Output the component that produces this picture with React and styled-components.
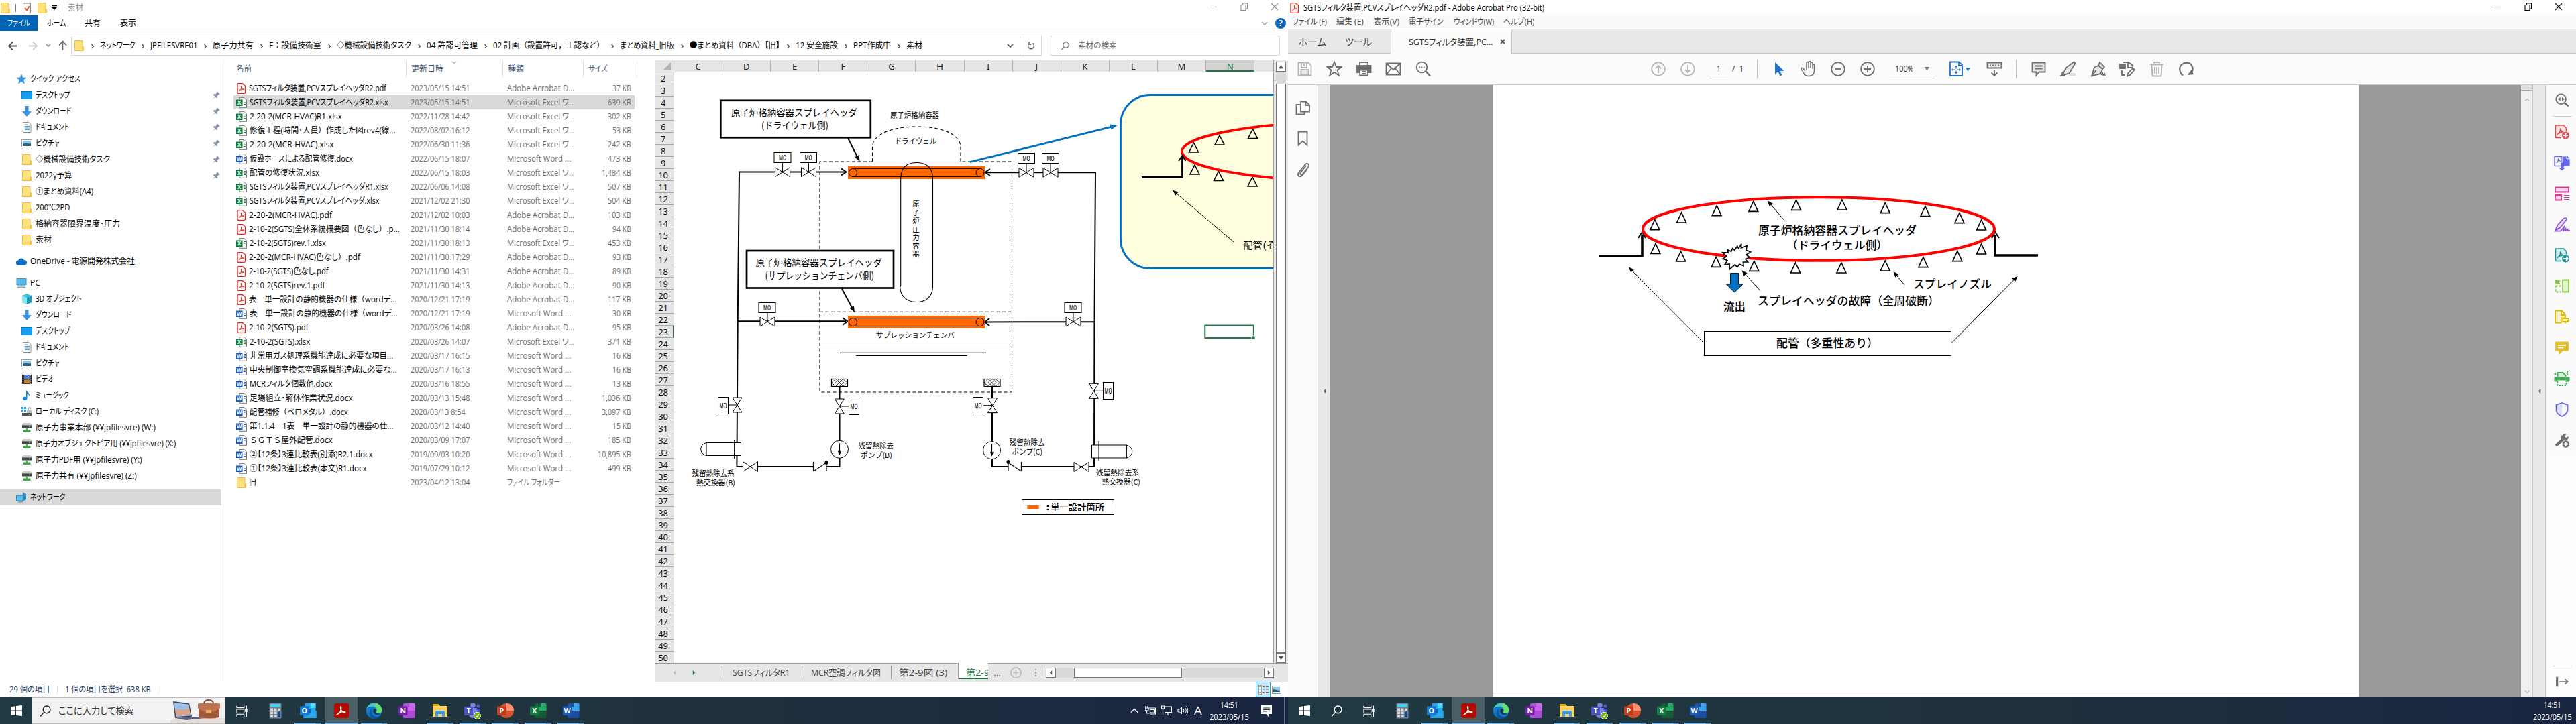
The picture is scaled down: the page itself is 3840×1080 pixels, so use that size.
import React, { useLayoutEffect, useRef, useState } from "react";
import styled, { createGlobalStyle } from "styled-components";

const Global = createGlobalStyle`
  * { box-sizing: border-box; }
  body { margin: 0; background: #fff; overflow: hidden; }
  body, #root { font-family: "Open Sans", "Noto Sans CJK JP", sans-serif; font-size: 12px; line-height: 16px; color: #000; }
  svg { display: block; flex: none; }
`;

/* ---------- text fitted to a column width ---------- */
const FitBox = styled.span`
  display: block; flex: none; width: ${(p) => p.$w}px; height: 16px; line-height: 16px;
  margin-left: ${(p) => p.$ml || 0}px; font-size: ${(p) => p.$s || 12}px; color: ${(p) => p.$c || "inherit"};
  white-space: pre;
`;
const FitInner = styled.span`
  display: inline-block; transform-origin: 0 50%; line-height: 16px; vertical-align: top;
  font-feature-settings: "palt";
`;
const Wide = styled.span`font-feature-settings: normal;`;
function Fit({ w, s, c, ml, children }) {
  const ref = useRef(null);
  const [k, setK] = useState(1);
  useLayoutEffect(() => {
    const n = ref.current.offsetWidth;
    if (n) setK(w / n);
  }, [w, children]);
  const parts = String(children).split(/([（），：　－Ａ-Ｚ]+)/);
  return (
    <FitBox $w={w} $s={s} $c={c} $ml={ml}>
      <FitInner ref={ref} style={{ transform: `scaleX(${k})` }}>
        {parts.map((t, i) => (i % 2 ? <Wide key={i}>{t}</Wide> : t))}
      </FitInner>
    </FitBox>
  );
}

/* ---------- shell ---------- */
const Desktop = styled.div`display: flex; width: 3840px; height: 1080px; overflow: hidden;`;
const Monitor = styled.div`width: 1920px; height: 1080px; display: flex; flex-direction: column; background: #fff;`;
const Row = styled.div`display: flex; align-items: center;`;
const Slot = styled.div`
  flex: none; width: ${(p) => p.$w || 44}px; height: 100%; margin-left: ${(p) => (p.$end ? "auto" : `${p.$ml || 0}px`)};
  display: flex; align-items: center; justify-content: center;
`;
const VLine = styled.div`flex: none; width: 1px; height: ${(p) => p.$h}px; background: ${(p) => p.$c || "#c0c0c0"}; margin-left: ${(p) => p.$ml || 0}px;`;

/* ---------- small icons ---------- */
const Folder = ({ s = 16 }) => (
  <svg width={s} height={s} viewBox="0 0 16 16"><path d="M1.500.5h11.500v9h1.500v6h-13z" fill="#ffe07e" stroke="#e9bd45" /><path d="M12 10h2.500v5.500h-2.500z" fill="#f3c850" /></svg>
);
const Pdf = () => (
  <svg width="16" height="16" viewBox="0 0 16 16"><path d="M3.500.7h6l4 3.500v9.600q0 1.500-1.500 1.500h-8.500q-1.500 0-1.500-1.500v-11.600q0-1.500 1.500-1.500z" fill="#fff" stroke="#e2231a" strokeWidth="1.300" /><path d="M4.500 11.500c3-1.500 4-5 3.300-7-.8-.8-1 2 1 4 1.500 1.500 3 1.500 3 .7-.5-1-5 0-7.300 2.300z" fill="none" stroke="#e2231a" /></svg>
);
const Office = ({ c, l }) => (
  <svg width="17" height="16" viewBox="0 0 17 16"><path d="M5 .6h7l3.500 3.500v11.200h-10.500z" fill="#fff" stroke="#777" /><path d="M11 5.500h3M11 8h3M11 10.500h3" stroke={c} strokeWidth="1.200" /><rect x="0" y="3.500" width="9.500" height="9.500" fill={c} /><text x="4.700" y="11" fontSize="8" fontWeight="700" textAnchor="middle" fill="#fff" fontFamily="Open Sans">{l}</text></svg>
);
const fileIcon = { p: <Pdf />, x: <Office c="#107c41" l="X" />, w: <Office c="#185abd" l="W" />, f: <Folder /> };
const Pin = () => (
  <svg width="12" height="12" viewBox="0 0 12 12"><path d="M7 0l5 4-1 1-1-.3-2 2.300.2 2.500-1 .8-2.500-2-4 3.700 3.500-4.500-2.500-2.200 1-1 2.600.2 1.900-2.300-.4-1z" fill="#8494a3" /></svg>
);
const navIcons = {
  star: <path d="M8 0l2 5.500 6 .3-4.700 3.700 1.700 6-5-3.500-5 3.500 1.700-6L0 5.800l6-.3z" fill="#3594dc" />,
  desk: <path d="M0 2.500h16v11h-16z" fill="#14a0f5" stroke="#0a74be" />,
  down: <path d="M5.500 0h5v8h4.500l-7 8-7-8h4.500z" fill="#3c93dc" />,
  doc: <><path d="M2.500.5h8.500l3 3v12h-11.500z" fill="#fff" stroke="#8a8a8a" /><path d="M5 4h4M5 6.500h7M5 9h7M5 11.500h7M5 13.500h4" stroke="#4b9bd8" /></>,
  pic: <><path d="M.5 2.500h15v11h-15z" fill="#fff" stroke="#999" /><path d="M2 4h12v8h-12z" fill="#8ec6f2" /><path d="M2 9c4-3 7 0 12-1v4h-12z" fill="#2f6275" /></>,
  cloud: <path d="M3.500 13.500a3.500 3.500 0 0 1-.4-7A5 5 0 0 1 12 6a3.800 3.800 0 0 1 1 7.500z" fill="#0f6cc4" />,
  pc: <><path d="M1 1.500h14v9.500h-14z" fill="#55bdf3" stroke="#4a90b8" /><path d="M6.500 11h3v2h-3zM2 13.500h12v1.500h-12z" fill="#8aa4b4" /></>,
  cube: <><path d="M8 0l7 3v10l-7 3-7-3v-10z" fill="#3fc4d8" /><path d="M1 3l7 3v10l-7-3z" fill="#8be4ee" /><path d="M8 6l7-3v10l-7 3z" fill="#1a9cb6" /></>,
  video: <><path d="M1 1h14v14h-14z" fill="#333" /><path d="M4 2h8v5.500h-8z" fill="#4f7fd0" /><path d="M4 8.500h8v5.500h-8z" fill="#c3813b" /><path d="M2.500 1v14M13.500 1v14" stroke="#eee" strokeDasharray="1.500 1.500" /></>,
  music: <path d="M7 0c1 3 6 4 5 9-.5-2-1.500-3-3.500-3v6.500a3.300 2.800 0 1 1-1.500-2.500z" fill="#1788dd" />,
  disk: <><path d="M1 10h14v4.500h-14z" fill="#555" /><path d="M11 12h2v1.300h-2z" fill="#5ce05c" /><path d="M0 1h3v3h-3zM4 1h3v3h-3zM0 5h3v3h-3zM4 5h3v3h-3z" fill="#1ba1e8" /><path d="M10 9v-5a2 2 0 0 1 4 0" fill="none" stroke="#999" strokeWidth="1.300" /><path d="M8 6h7v4h-7z" fill="#b8bfc4" /></>,
  net: <><path d="M1 3l2-2h10l2 2v5h-14z" fill="#c8c8c8" /><path d="M1 4.500h14v4h-14z" fill="#444" /><path d="M11 5.500h2v1.300h-2z" fill="#5ce05c" /><path d="M7 8.500h2v3h4.500v3.500h-11v-3.500h4.500z" fill="#39a845" /></>,
  network: <><path d="M10 0l5 3v8l-6 3z" fill="#2b88c9" /><path d="M.5 5h11v8h-11z" fill="#5ec0f2" stroke="#2c7fb5" /><path d="M3 14h7v1.500h-7z" fill="#7b98a8" /></>,
};
const NavIcon = ({ k }) => (k === "folder" ? <Folder /> : <svg width="16" height="16" viewBox="0 0 16 16">{navIcons[k]}</svg>);

const Stroke = ({ d, s = 16, c = "#555", sw = 1.300, fill = "none", vb = 16, children }) => (
  <svg width={s} height={s} viewBox={`0 0 ${vb} ${vb}`} fill={fill} stroke={c} strokeWidth={sw}>{d && <path d={d} />}{children}</svg>
);
const WinControls = ({ c }) => (
  <>
    <Stroke s={12} vb={12} c={c} sw={1.100} d="M.5 6.500h10.500" />
    <Stroke s={12} vb={12} c={c} sw={1.100} d="M1 3.500h7v8h-7zM3.500 3.500v-2.500h7v8h-2.500" />
    <Stroke s={12} vb={12} c={c} sw={1.100} d="M1 1l10 10M11 1l-10 10" />
  </>
);
const Controls = styled.div`
  margin-left: auto; display: flex; gap: 33.500px; align-self: flex-start; padding: 4px ${(p) => p.$r}px 0 0;
`;

/* ---------- explorer ---------- */
const ExplorerTitle = styled(Row)`height: 23px; flex: none;`;
const Ribbon = styled(Row)`height: 25px; flex: none; border-bottom: 1px solid #d9dadb;`;
const FileTab = styled.div`width: 56px; height: 23px; background: #0064b6; display: flex; align-items: center; padding-left: 11px; color: #fff; align-self: flex-start;`;
const Help = styled.div`width: 16px; height: 16px; border-radius: 50%; background: #0f66bd; color: #fff; font-weight: 700; text-align: center; margin-left: 10px; margin-right: 3px;`;
const AddressRow = styled.div`height: 42px; flex: none; display: flex; padding: 5px 0 7px;`;
const HistoryNav = styled(Row)`width: 106px; height: 30px; padding-left: 11px;`;
const AddressBox = styled(Row)`width: 1447px; height: 30px; border: 1px solid #d9d9d9; padding-left: 3px;`;
const SearchBox = styled(Row)`width: 342px; height: 30px; border: 1px solid #d9d9d9; margin-left: 13px; padding-left: 14px; gap: 13px;`;
const Sep = styled.div`width: 23px; display: flex; justify-content: center; padding-top: 1px;`;
const Body = styled.div`height: 927px; flex: none; display: flex;`;
const NavPane = styled.div`width: 333px; border-right: 1px solid #f0f0f0; padding-top: 15.500px; display: flex; flex-direction: column; gap: 8px;`;
const NavRow = styled.div`
  height: 24px; width: 330px; display: flex; align-items: center; padding-left: ${(p) => (p.$top ? 24 : 32)}px; gap: 5px;
  background: ${(p) => (p.$sel ? "#d9d9d9" : "transparent")};
`;
const PinSlot = styled.div`margin-left: auto; padding-right: 2px;`;
const ListPane = styled.div`width: 643px;`;
const Head = styled.div`height: 25px; display: flex; align-items: center; color: #4c607a; margin-bottom: 6px; position: relative;`;
const HeadCell = styled.div`width: ${(p) => p.$w}px; height: 25px; padding-left: 7px; border-right: 1px solid #e2e2e2; display: flex; align-items: center;`;
const SortMark = styled.div`position: absolute; left: 340px; top: 0;`;
const FileRow = styled.div`
  height: 21px; width: 598px; margin-left: 15px; padding-left: 4px; display: flex; align-items: center;
  background: ${(p) => (p.$sel ? "#d9d9d9" : "transparent")};
`;
const NameCell = styled.div`width: 260px; display: flex; align-items: center; gap: 3px;`;
const DateCell = styled.div`width: 144px; color: #6d6d6d;`;
const TypeCell = styled.div`width: 103px; color: #6d6d6d;`;
const SizeCell = styled.div`width: 82px; color: #6d6d6d; display: flex; justify-content: flex-end;`;
const Status = styled(Row)`height: 23px; flex: none; color: #1e395b; padding-left: 14px;`;
const ViewButton = styled.div`
  width: ${(p) => (p.$on ? 22 : 18)}px; height: 23px; display: flex; align-items: center; justify-content: center;
  background: ${(p) => (p.$on ? "#cce8f6" : "transparent")}; border: ${(p) => (p.$on ? "1px solid #26a0da" : "0")};
`;

const crumbs = [
  ["ネットワーク", 52], ["JPFILESVRE01", 70], ["原子力共有", 61], ["E：設備技術室", 78], ["◇機械設備技術タスク", 111],
  ["04 許認可管理", 76], ["02 計画（設置許可，工認など）", 166], ["まとめ資料_旧版", 81], ["●まとめ資料（DBA）【旧】", 135],
  ["12 安全施設", 63], ["PPT作成中", 56], ["素材", 24],
];
const navGroups = [
  [["star", "クイック アクセス", 75, 1], ["desk", "デスクトップ", 52, 0, 1], ["down", "ダウンロード", 53, 0, 1], ["doc", "ドキュメント", 50, 0, 1], ["pic", "ピクチャ", 36, 0, 1],
    ["folder", "◇機械設備技術タスク", 111, 0, 1], ["folder", "2022y予算", 54, 0, 1], ["folder", "①まとめ資料(A4)", 86], ["folder", "200℃2PD", 51], ["folder", "格納容器限界温度･圧力", 126], ["folder", "素材", 24]],
  [["cloud", "OneDrive - 電源開発株式会社", 156, 1]],
  [["pc", "PC", 15, 1], ["cube", "3D オブジェクト", 69], ["down", "ダウンロード", 53], ["desk", "デスクトップ", 52], ["doc", "ドキュメント", 50], ["pic", "ピクチャ", 36], ["video", "ビデオ", 27], ["music", "ミュージック", 50],
    ["disk", "ローカル ディスク (C:)", 94], ["net", "原子力事業本部 (¥¥jpfilesvre) (W:)", 179], ["net", "原子力オブジェクトピア用 (¥¥jpfilesvre) (X:)", 209], ["net", "原子力PDF用 (¥¥jpfilesvre) (Y:)", 159], ["net", "原子力共有 (¥¥jpfilesvre) (Z:)", 151]],
  [["network", "ネットワーク", 52, 1, 0, 1]],
];
const files = [
  ["p", "SGTSフィルタ装置,PCVスプレイヘッダR2.pdf", 205, "2023/05/15 14:51", "37 KB"],
  ["x", "SGTSフィルタ装置,PCVスプレイヘッダR2.xlsx", 207, "2023/05/15 14:51", "639 KB"],
  ["x", "2-20-2(MCR-HVAC)R1.xlsx", 138, "2022/11/28 14:42", "302 KB"],
  ["x", "修復工程(時間･人員）作成した図rev4(線...", 218, "2022/08/02 16:12", "53 KB"],
  ["x", "2-20-2(MCR-HVAC).xlsx", 125, "2022/06/30 11:36", "242 KB"],
  ["w", "仮設ホースによる配管修復.docx", 154, "2022/06/15 18:07", "473 KB"],
  ["x", "配管の修復状況.xlsx", 104, "2022/06/15 18:03", "1,484 KB"],
  ["x", "SGTSフィルタ装置,PCVスプレイヘッダR1.xlsx", 207, "2022/06/06 14:08", "507 KB"],
  ["x", "SGTSフィルタ装置,PCVスプレイヘッダ.xlsx", 193, "2021/12/02 21:30", "504 KB"],
  ["p", "2-20-2(MCR-HVAC).pdf", 124, "2021/12/02 10:03", "103 KB"],
  ["p", "2-10-2(SGTS)全体系統概要図（色なし）.p...", 225, "2021/11/30 18:14", "94 KB"],
  ["x", "2-10-2(SGTS)rev.1.xlsx", 114, "2021/11/30 18:13", "453 KB"],
  ["p", "2-20-2(MCR-HVAC)色なし）.pdf", 166, "2021/11/30 17:29", "93 KB"],
  ["p", "2-10-2(SGTS)色なし.pdf", 119, "2021/11/30 14:31", "89 KB"],
  ["p", "2-10-2(SGTS)rev.1.pdf", 113, "2021/11/30 14:13", "90 KB"],
  ["p", "表　単一設計の静的機器の仕様（wordデ...", 221, "2020/12/21 17:19", "117 KB"],
  ["w", "表　単一設計の静的機器の仕様（wordデ...", 221, "2020/12/21 17:19", "30 KB"],
  ["p", "2-10-2(SGTS).pdf", 89, "2020/03/26 14:08", "95 KB"],
  ["x", "2-10-2(SGTS).xlsx", 90, "2020/03/26 14:07", "371 KB"],
  ["w", "非常用ガス処理系機能達成に必要な項目...", 214, "2020/03/17 16:15", "16 KB"],
  ["w", "中央制御室換気空調系機能達成に必要な...", 220, "2020/03/17 16:13", "16 KB"],
  ["w", "MCRフィルタ個数他.docx", 123, "2020/03/16 18:55", "13 KB"],
  ["w", "足場組立･解体作業状況.docx", 154, "2020/03/13 15:48", "1,036 KB"],
  ["w", "配管補修（ベロメタル）.docx", 147, "2020/03/13 8:54", "3,097 KB"],
  ["w", "第1.1.4－1表　単一設計の静的機器の仕...", 214, "2020/03/12 14:40", "15 KB"],
  ["w", "ＳＧＴＳ屋外配管.docx", 124, "2020/03/09 17:07", "185 KB"],
  ["w", "②【12条】3連比較表(別添)R2.1.docx", 184, "2019/09/03 10:20", "10,895 KB"],
  ["w", "①【12条】3連比較表(本文)R1.docx", 175, "2019/07/29 10:12", "499 KB"],
  ["f", "旧", 11, "2023/04/12 13:04", ""],
];
const types = { p: ["Adobe Acrobat D...", 100], x: ["Microsoft Excel ワ...", 101], w: ["Microsoft Word ...", 95], f: ["ファイル フォルダー", 79] };
const sizeW = { 5: 28, 6: 35, 8: 44, 9: 50 };

/* ---------- spreadsheet ---------- */
const Sheet = styled.div`width: 944px; height: 927px; background: #e6e6e6; display: flex; flex-direction: column;`;
const SheetMain = styled.div`height: 900px; flex: none; display: flex; border-bottom: 1px solid #9b9b9b;`;
const SheetGrid = styled.div`width: 923px; border-right: 1px solid #a0a0a0; overflow: hidden;`;
const ColHeads = styled.div`height: 18px; display: flex; border-bottom: 1px solid #9b9b9b; overflow: hidden;`;
const Corner = styled.div`width: 29px; height: 17px; border-right: 1px solid #b5b5b5; flex: none; display: flex; justify-content: flex-end; align-items: flex-end; padding: 0 4px 3px 0;`;
const ColHead = styled.div`
  width: 72.100px; height: 17px; flex: none; text-align: center; font: 13px/19px "Noto Sans", sans-serif;
  border-right: 1px solid #b1b1b1; color: ${(p) => (p.$sel ? "#217346" : "#222")}; background: ${(p) => (p.$sel ? "#d2d2d2" : "transparent")};
  box-shadow: ${(p) => (p.$sel ? "inset 0 -2px #217346" : "none")};
`;
const GridBody = styled.div`display: flex; height: 882px; background: #fff;`;
const RowHeads = styled.div`width: 29px; flex: none; border-right: 1px solid #9b9b9b; background: #e6e6e6;`;
const RowHead = styled.div`
  height: 18px; border-bottom: 1px solid #a8a8a8; font: 13px/18px "Noto Sans", sans-serif; text-align: center; padding-right: 3px; letter-spacing: -0.200px;
  box-shadow: ${(p) => (p.$sel ? "inset -1px 0 #217346" : "none")}; color: #111;
`;
const VScroll = styled.div`width: 21px; display: flex; flex-direction: column; align-items: flex-start; padding: 2px 0 0 3px;`;
const ScrollBtn = styled.div`width: 15px; height: 15px; flex: none; background: #fff; border: 1px solid #777; display: flex; align-items: center; justify-content: center;`;
const VTrack = styled.div`width: 15px; height: 18px; background: #dadada;`;
const VThumb = styled.div`width: 15px; height: 849px; background: #fff; border: 1px solid #777; border-bottom-width: 2px;`;
const Tabs = styled.div`height: 27px; display: flex; align-items: flex-start;`;
const Tab = styled.div`
  flex: none; width: ${(p) => p.$w}px; height: ${(p) => (p.$on ? 24 : 20)}px; margin: ${(p) => (p.$on ? -1 : 3)}px 0 0 ${(p) => p.$ml || 0}px; padding: ${(p) => (p.$on ? 6 : 2)}px 0 0 ${(p) => p.$pl}px; overflow: hidden;
  border-left: 1px solid #9b9b9b; color: ${(p) => (p.$on ? "#217346" : "#444")}; background: ${(p) => (p.$on ? "#fff" : "transparent")};
  box-shadow: ${(p) => (p.$on ? "inset 0 -2px #217346" : "none")};
`;
const TabTools = styled(Row)`height: 27px;`;
const HTrack = styled.div`width: 310px; height: 15px; background: #dadada; padding-left: 27px;`;
const HThumb = styled.div`width: 161px; height: 15px; background: #fff; border: 1px solid #777;`;
const Tri = ({ d, c = "#555" }) => <svg width="7" height="7" viewBox="0 0 8 8"><path d={{ u: "M4 1l4 6h-8z", d: "M0 1h8l-4 6z", l: "M6 0v8l-4-4z", r: "M2 0v8l4-4z" }[d]} fill={c} /></svg>;

/* ---------- diagrams ---------- */
const Label = styled.text`font-family: "Noto Sans CJK JP", sans-serif; white-space: pre; fill: #000;`;
const T = ({ x, x2, y, s = 11, w = 400, children }) => (
  <Label x={x} y={y + s * 0.37} fontSize={s} fontWeight={w} textLength={x2 - x} lengthAdjust="spacingAndGlyphs">{children}</Label>
);
const Arrow = ({ x1, y1, x2, y2, c = "#000", sw = 1, h = 9 }) => {
  const a = Math.atan2(y2 - y1, x2 - x1);
  const p = (r, o) => `${x2 - r * Math.cos(a + o)},${y2 - r * Math.sin(a + o)}`;
  return <g><line x1={x1} y1={y1} x2={x2 - h * 0.700 * Math.cos(a)} y2={y2 - h * 0.700 * Math.sin(a)} stroke={c} strokeWidth={sw} /><polygon points={`${x2},${y2} ${p(h, 0.380)} ${p(h, -0.380)}`} fill={c} /></g>;
};
const HValve = ({ x, y, w = 11, h = 7 }) => <path d={`M${x - w} ${y - h}v${2 * h}L${x + w} ${y - h}v${2 * h}z`} fill="#fff" stroke="#000" />;
const VValve = ({ x, y, w = 7, h = 11 }) => <path d={`M${x - w} ${y - h}h${2 * w}L${x - w} ${y + h}h${2 * w}z`} fill="#fff" stroke="#000" />;
const Mo = ({ x, y, w = 25, h = 15 }) => (
  <g><rect x={x} y={y} width={w} height={h} fill="#fff" stroke="#000" /><text x={x + w / 2 - 5.500} y={y + h / 2 + 3.700} fontSize="10.500" fontWeight="500" textLength="11" lengthAdjust="spacingAndGlyphs" fontFamily="Noto Sans, sans-serif">MO</text></g>
);
const Nozzle = ({ x, y, h = 15, fill = "#fff" }) => <path d={`M${x} ${y}l7 ${h}h-14z`} fill={fill} stroke="#000" strokeWidth="1.600" />;
const Header = ({ y }) => (
  <g><rect x="1264" y={y} width="204" height="19" fill="#ff6600" /><path d={`M1271 ${y + 3.500}H1461M1271 ${y + 15.500}H1461`} stroke="#000" strokeWidth="1.200" /><ellipse cx="1271.500" cy={y + 9.500} rx="6" ry="6" fill="none" stroke="#000" /><ellipse cx="1461" cy={y + 9.500} rx="6" ry="6" fill="none" stroke="#000" /></g>
);
const Pump = ({ x, y }) => <g><circle cx={x} cy={y} r="13" fill="#fff" stroke="#000" /><Arrow x1={x} y1={y - 9} x2={x} y2={y + 9} h={7} sw={1.200} /></g>;
const Strainer = ({ x }) => <g><rect x={x} y="565.500" width="24" height="11" fill="#fff" stroke="#000" strokeWidth="1.200" /><path d={`M${x} 571l6-5.500 11 11 7-6M${x} 571l6 5.500 11-11 7 6M${x + 6} 576.500l-6-6M${x + 12} 565.500l-6 5 6 6M${x + 12} 565.500l6 5-6 6`} stroke="#000" strokeWidth=".7" fill="none" /></g>;

const SystemDiagram = () => (
  <svg width="893" height="881" viewBox="1005 108 893 881">
    <rect x="1670.500" y="141.500" width="400" height="259" rx="44" fill="#ffffe0" stroke="#0070c0" strokeWidth="2.800" />
    <g stroke="#000" fill="none" strokeWidth="1.100" strokeDasharray="5 3.500">
      <path d="M1300.500 241V218C1302 200 1330 189 1367 189S1430 200 1432 218V241" />
      <path d="M1300.500 241H1222V585H1508.500V241H1432M1222 465.300H1508.500" />
    </g>
    <path d="M1222 517.500H1508.500M1252 526.300H1470M1276 530.500H1441.500" stroke="#000" strokeWidth="1.200" />
    <g stroke="#000" strokeWidth="2" fill="none">
      <path d="M1260 256.500H1102L1099.700 479.300 1098.400 696H1212.500M1232.500 696H1251.500V576M1099.700 479.300H1261" />
      <path d="M1470 257.300H1633L1631.500 480 1631 696H1522.500M1502.700 696H1479V576M1470 480.500L1631.500 480" />
      <path d="M1254 251.500l7.500 5-7.500 5M1476 252l-7.500 5 7.500 5M1256 474l7.500 5.500-7.500 5.500M1475 475l-7 5.500 7 5.500" />
    </g>
    <Header y={248} /><Header y={471} />
    <path d="M1342.700 266C1343 250 1352 242.500 1366.600 242.500S1390 250 1390.500 266V428C1390 443 1380 450.500 1366.600 450.500S1342 443 1341.700 428L1342.700 426z" fill="none" stroke="#000" strokeWidth="1.100" />
    {[..."原子炉圧力容器"].map((c, i) => <T key={i} x={1360.500} x2={1370.500} y={304.700 + i * 12.450} s={10} w={500}>{c}</T>)}
    <path d="M1166.600 242V256M1205.500 242V256M1530 243V257M1566 243V257M1144 467V479M1600 467V480M1085 604H1099M1251 606H1266M1465 604.700H1479M1630 583.300H1645" stroke="#000" />
    <HValve x={1166.600} y={256.700} /><HValve x={1205.500} y={256.700} /><HValve x={1530} y={257.300} /><HValve x={1566} y={257.300} />
    <HValve x={1144} y={480} /><HValve x={1600} y={480} /><HValve x={1118.500} y={696} h={7.500} /><HValve x={1612} y={696.500} h={7} />
    <VValve x={1099} y={604} /><VValve x={1251.300} y={606} /><VValve x={1479.500} y={604.700} /><VValve x={1630.500} y={583.300} />
    <Mo x={1154} y={227.500} /><Mo x={1192.500} y={227.500} /><Mo x={1517.500} y={228.500} /><Mo x={1553.500} y={228.500} /><Mo x={1131} y={451.500} /><Mo x={1587} y={451.500} />
    <Mo x={1070.500} y={592.500} w={15} h={25} /><Mo x={1265.500} y={593.500} w={15} h={25} /><Mo x={1450.500} y={592.500} w={15} h={25} /><Mo x={1644.500} y={570.500} w={15} h={25} />
    <Strainer x={1239.500} /><Strainer x={1467} />
    <Pump x={1251.500} y={670.300} /><Pump x={1478.500} y={671.700} />
    <path d="M1212.500 703V689M1212.500 703L1232 690V703M1522.500 703V689M1522.500 703L1503 690V703" stroke="#000" fill="none" strokeWidth="1.200" />
    <ellipse cx="1232" cy="690" rx="2.500" ry="3" /><ellipse cx="1503" cy="689" rx="2.500" ry="3" />
    <path d="M1053 660.500H1104.500V679.500H1053C1042 677 1042 663 1053 660.500zV679.500M1094.600 656V684" stroke="#000" fill="#fff" />
    <path d="M1679.400 664H1627.500V683H1679.400C1690.500 680 1690.500 667 1679.400 664zV683M1638 658V687" stroke="#000" fill="#fff" />
    <rect x="1074.300" y="149.800" width="223.500" height="55.500" fill="#fff" stroke="#000" strokeWidth="2.700" />
    <rect x="1113" y="374" width="219" height="55.500" fill="#fff" stroke="#000" strokeWidth="2.700" />
    <Arrow x1={1264} y1={206} x2={1281.500} y2={241} sw={2} h={10} /><Arrow x1={1255} y1={431} x2={1274} y2={466} sw={2} h={10} />
    <T x={1090} x2={1278} y={167.700} s={14}>原子炉格納容器スプレイヘッダ</T><T x={1135} x2={1235} y={186.700} s={14}>(ドライウェル側)</T>
    <T x={1126.500} x2={1315} y={391.700} s={14}>原子炉格納容器スプレイヘッダ</T><T x={1140.500} x2={1303} y={410.700} s={14}>(サプレッションチェンバ側)</T>
    <T x={1327} x2={1400} y={171.700}>原子炉格納容器</T><T x={1334} x2={1396} y={210.700}>ドライウェル</T><T x={1306} x2={1423} y={500.300}>サプレッションチェンバ</T>
    <T x={1279.500} x2={1332} y={664.700}>残留熱除去</T><T x={1283} x2={1330} y={678.500}>ポンプ(B)</T>
    <T x={1504.600} x2={1557.600} y={659.700}>残留熱除去</T><T x={1508.500} x2={1554} y={673.700}>ポンプ(C)</T>
    <T x={1031.400} x2={1094.600} y={705.700}>残留熱除去系</T><T x={1038} x2={1096} y={719.500}>熱交換器(B)</T>
    <T x={1634} x2={1698} y={704.700}>残留熱除去系</T><T x={1642.400} x2={1700} y={718.700}>熱交換器(C)</T>
    <rect x="1523.500" y="745.500" width="137" height="22" fill="#fff" stroke="#000" /><rect x="1531.400" y="754" width="17.300" height="5.500" fill="#ff6600" />
    <T x={1559} x2={1565} y={756.500} s={13} w={500}>:</T><T x={1566} x2={1646} y={756.500} s={13} w={500}>単一設計箇所</T>
    <Arrow x1={1446} y1={241.700} x2={1665.500} y2={187} c="#0070c0" sw={2.800} h={11} />
    {[[1779.500, 213], [1818, 202], [1867.500, 192.500], [1781, 246], [1816.500, 255.500], [1867, 264]].map(([x, y]) => <Nozzle key={x + y} x={x} y={y} h={14} fill="none" />)}
    <ellipse cx="2025" cy="226" rx="263" ry="44.800" fill="none" stroke="#f00" strokeWidth="3.800" />
    <path d="M1702 264.500H1762.500V234" stroke="#000" strokeWidth="2.800" fill="none" /><path d="M1757 240l5.500-8 5 8" stroke="#000" strokeWidth="2" fill="none" />
    <Arrow x1={1840} y1={361.700} x2={1748} y2={283.700} />
    <T x={1853.500} x2={1881.500} y={365.700} s={14}>配管</T><T x={1882} x2={1888} y={365.700} s={14}>(</T><T x={1888} x2={1901} y={365.700} s={14}>そ</T>
    <rect x="1796.300" y="485.500" width="72.500" height="18.500" fill="none" stroke="#217346" strokeWidth="1.900" /><rect x="1866" y="501" width="5" height="5" fill="#217346" stroke="#fff" strokeWidth=".8" />
  </svg>
);

const zx = (v) => 2300 + v / 1.960;
const zy = (v) => 260 + v / 3;
const nozzles = [[327, 200], [405, 168], [508, 137], [615, 118], [740, 112], [874, 111], [1000, 125], [1117, 140], [1217, 170], [1281, 201], [329, 307], [403, 342], [506, 367], [617, 385], [738, 393], [872, 393], [1000, 384], [1111, 368], [1211, 341], [1281, 309]];
const burst = [580, 311, 579, 330, 596, 320, 594, 340, 607, 348, 594, 360, 604, 372, 592, 380, 599, 393, 585, 393, 586, 410, 574, 402, 568, 416, 561, 405, 545, 426, 545, 402, 531, 405, 539, 386, 526, 378, 537, 368, 525, 350, 541, 351, 540, 338, 550, 346, 554, 332, 560, 340, 568, 322, 572, 332];
const SprayDiagram = () => (
  <svg width="1290" height="912" viewBox="2226 127 1290 912">
    <path d="M2384 382H2448V350M3038 381H2974V350" stroke="#000" strokeWidth="3.600" fill="none" />
    <path d="M2442 355l6-9 5 9M2969 355l5-9 6 9" stroke="#000" strokeWidth="2.200" fill="none" />
    <ellipse cx="2711" cy="341.500" rx="262" ry="47.300" fill="none" stroke="#f00" strokeWidth="4" />
    {nozzles.map(([x, y], i) => <Nozzle key={i} x={zx(x)} y={zy(y) + 1} />)}
    <polygon points={burst.map((v, i) => (i % 2 ? zy(v) : zx(v))).join(" ")} fill="#fff" stroke="#000" strokeWidth="1.700" />
    <path d="M2579.500 407.500H2591.500V424H2598L2585.500 436 2573.500 424H2579.500z" fill="#0070c0" stroke="#111" />
    <Arrow x1={2660.700} y1={329.700} x2={2634.700} y2={299.300} /><Arrow x1={2624} y1={433.700} x2={2596.400} y2={403.300} /><Arrow x1={2839.300} y1={425.300} x2={2822.400} y2={405} />
    <Arrow x1={2539.800} y1={511.700} x2={2427.600} y2={398.300} /><Arrow x1={2909} y1={511.700} x2={3007.700} y2={411.700} />
    <rect x="2540.500" y="494.500" width="368" height="36" fill="#fff" stroke="#000" />
    <T x={2621} x2={2857} y={343.700} s={16.500} w={500}>原子炉格納容器スプレイヘッダ</T><T x={2663} x2={2814} y={366} s={16.500} w={500}>（ドライウェル側）</T>
    <T x={2852} x2={2969} y={424} s={16.500} w={500}>スプレイノズル</T><T x={2620} x2={2891} y={449} s={16.500} w={500}>スプレイヘッダの故障（全周破断）</T>
    <T x={2569} x2={2602} y={458} s={16.500} w={500}>流出</T><T x={2648} x2={2800} y={512} s={16.500} w={500}>配管（多重性あり）</T>
  </svg>
);

/* ---------- taskbar ---------- */
const Bar = styled.div`height: 40px; flex: none; display: flex; background: linear-gradient(90deg, #203943 0%, #20363f 35%, #1f2e3e 65%, #1a2541 100%); color: #fff;`;
const SysBtn = styled.div`width: 48px; height: 40px; display: flex; align-items: center; justify-content: center;`;
const TaskSearch = styled.div`width: 288px; height: 40px; background: #f2f2f2; border: 1px solid #bbb; border-width: 1px 1px 1px 0; color: #333; display: flex; align-items: center; padding-left: 11px; gap: 11px;`;
const SearchArt = styled.div`margin-left: auto;`;
const AppBtn = styled.div`
  width: 49px; height: 40px; display: flex; align-items: center; justify-content: center; background: ${(p) => (p.$active ? "#4c5f66" : "transparent")};
  border-bottom: ${(p) => (p.$active ? "2px solid #76b9ed" : "0")}; padding-top: ${(p) => (p.$active ? 2 : 0)}px;
  ${(p) => p.$run && "background: linear-gradient(90deg, transparent 4.500px, #76b9ed 4.500px, #76b9ed 36.500px, #5b8fb8 36.500px, #5b8fb8 44.500px, transparent 44.500px) 0 100% / 100% 2px no-repeat;"}
`;
const Tray = styled(Row)`margin-left: auto; height: 40px;`;
const Clock = styled.div`width: 62px; display: flex; flex-direction: column; align-items: center; gap: 2px; padding-top: 1px; margin-left: ${(p) => p.$ml || 0}px;`;
const OfficeApp = ({ a, b, c, l, round }) => (
  <svg width="25" height="24" viewBox="0 0 25 24">
    {round ? <circle cx="14" cy="12" r="11" fill={b} /> : <rect x="7" y="1" width="17.500" height="22" rx="1.500" fill={b} />}
    {round ? <path d="M14 1a11 11 0 0 1 11 11h-11z" fill={c} /> : <path d="M16 1h7a1.500 1.500 0 0 1 1.500 1.500v9.500h-17.500v-5.500h9z" fill={c} />}
    <rect x="0" y="5.500" width="13.500" height="13.500" rx="1.200" fill={a} /><text x="6.700" y="16" textAnchor="middle" fontSize="10.500" fontWeight="700" fill="#fff" fontFamily="Open Sans">{l}</text>
  </svg>
);
const apps = [
  [<svg width="19" height="24" viewBox="0 0 19 24"><rect x=".5" y=".5" width="18" height="23" rx="1.500" fill="#75818b" /><rect x="2" y="2" width="15" height="4.500" fill="#45d4f7" /><path d="M2 8.500h4v3.500h-4zM7.500 8.500h4v3.500h-4zM13 8.500h4v3.500h-4zM2 13.500h4v3.500h-4zM7.500 13.500h4v3.500h-4zM2 18.500h4v3.500h-4zM7.500 18.500h4v3.500h-4z" fill="#d5d9dc" /><path d="M13 13.500h4v8.500h-4z" fill="#134f94" /></svg>],
  [<svg width="25" height="24" viewBox="0 0 25 24"><path d="M8 1h15.500v16h-15.500z" fill="#28a8ea" /><path d="M16 1h7.500v7h-7.500z" fill="#50d9ff" /><path d="M8 9h8v7h-8z" fill="#0364b8" /><path d="M5 12l10 6 9.500-6v11h-19.500z" fill="#1490df" /><path d="M5 23l19.500-11v11z" fill="#28a8ea" /><rect x="0" y="5.500" width="13.500" height="13.500" rx="1" fill="#0f78d4" /><text x="6.700" y="16" textAnchor="middle" fontSize="10.500" fontWeight="700" fill="#fff" fontFamily="Open Sans">O</text></svg>, 1],
  [<svg width="22" height="22" viewBox="0 0 22 22"><rect width="22" height="22" rx="4" fill="#b30b00" /><path d="M5 16.500c3-1 6-6 5.700-10.500-.5-2.300-1.500-1-.8 2 .8 3 3.500 6 6 6 1.800-.3.500-1.800-2-1.500-3.400.3-7 1.800-8.900 4z" fill="none" stroke="#fff" strokeWidth="1.500" /></svg>, 0, 1],
  [<svg width="25" height="24" viewBox="0 0 24 24"><circle cx="12" cy="12" r="11.800" fill="#1179cc" /><path d="M1 9C3 2 10-1 16 1s9 8 7.500 12.500c-1.500 3.500-8 3-8.500 1 3-4 0-8-5-8.500C6 6 2.500 7 1 9z" fill="#45c7b4" /><path d="M14 1c7 1 10 6 9.500 11.500-1 4-7.500 4-8.500 2 3-3 1-7-1-8z" fill="#63dc68" /><path d="M10 9c-4 3-2 12 6 12 3 0 5-1 6-3-4 8-12 7-15 3s-2-10 3-12z" fill="#0b4f9e" /><path d="M12 9c-3 3-1 8 4 9 2 .3 5-.5 6-1-2-1-8 0-7-3 2-2 0-5-3-5z" fill="#20353f" /></svg>, 1],
  [<OfficeApp a="#7719aa" b="#ae4bd5" c="#ca64ea" l="N" />],
  [<svg width="24" height="22" viewBox="0 0 24 22"><path d="M1 2h9l2 2h11v16h-22z" fill="#ffd567" /><path d="M1 1h9v3h-9z" fill="#e8a800" /><path d="M5 12q0-1 1-1h12q1 0 1 1v8h-4v-4h-6v4h-4z" fill="#3f9ce0" /></svg>, 1],
  [<svg width="25" height="26" viewBox="0 0 25 26"><circle cx="13" cy="5" r="3.700" fill="#7b83eb" /><circle cx="21" cy="6" r="2.600" fill="#5059c9" /><path d="M7 9h12v10q-1 5-6 5t-6-5z" fill="#7b83eb" /><path d="M18 10h6v7q-1 3-4 3z" fill="#5059c9" /><rect x="0" y="7" width="13" height="13" rx="1" fill="#4b53bc" /><text x="6.500" y="17" textAnchor="middle" fontSize="10.500" fontWeight="700" fill="#fff" fontFamily="Open Sans">T</text><circle cx="19.500" cy="20.500" r="5" fill="#6bb700" stroke="#fff" /><path d="M17 20.500l2 2 3-4" stroke="#fff" fill="none" strokeWidth="1.300" /></svg>, 1],
  [<OfficeApp a="#c43e1c" b="#d35230" c="#ff8f6b" l="P" round />, 1],
  [<OfficeApp a="#107c41" b="#185c37" c="#27a867" l="X" />, 1],
  [<OfficeApp a="#185abd" b="#1b4f9e" c="#41a5ee" l="W" />, 1],
];
const WinLogo = () => <svg width="17" height="16" viewBox="0 0 17 16"><path d="M0 2.200L7 1.300V7.500H0zM8 1.100L17 0V7.500H8zM0 8.500H7V14.700L0 13.800zM8 8.500H17V16L8 14.900z" fill="#fff" /></svg>;
const Mag = ({ c }) => <Stroke s={17} c={c} sw={1.300} d="M6.500 9.500l-5.500 6M10 1a5 5 0 1 1-.01 0z" />;
const TaskView = () => <Stroke s={17} c="#fff" sw={1.200} d="M1 .5v3h10v-3M1 5.500h10v5.500h-10zM1 16v-3h10v3M14.500 .5v15.500M13 5.500h3v3h-3z" />;

function Taskbar({ main }) {
  return (
    <Bar>
      <SysBtn><WinLogo /></SysBtn>
      {main ? (
        <TaskSearch>
          <Mag c="#222" /><Fit w={112} s={14}>ここに入力して検索</Fit>
          <SearchArt>
            <svg width="80" height="38" viewBox="0 0 80 38">
              <path d="M0 33l14-3h66v8h-80z" fill="#e5ddd6" /><path d="M3 5l24 3 4 20-25 2z" fill="#3b4663" /><path d="M4.500 7l21 2.500 3.500 17-21.500 1.500z" fill="#9cc0e8" /><path d="M6 18c6-4 14 2 21-3l2 10-21.500 2z" fill="#d9a48c" /><path d="M7 30l24-2 19 2-28 3z" fill="#59617a" />
              <path d="M49 9q0-6 7-6t7 6" fill="none" stroke="#7c4a30" strokeWidth="1.800" /><path d="M41 9q15-2 31 0v20q-15 3-31 0z" fill="#a2583a" /><path d="M40 8.500q16-2 33 0v7q-8 6-16 6t-17-6z" fill="#be7350" /><rect x="52" y="18" width="8" height="5" fill="#efb45a" />
            </svg>
          </SearchArt>
        </TaskSearch>
      ) : <SysBtn><Mag c="#fff" /></SysBtn>}
      <SysBtn><TaskView /></SysBtn>
      <VLine $h={1} $c="transparent" $ml={1} />
      {apps.map(([icon, run, active], i) => <AppBtn key={i} $run={run} $active={active}>{icon}</AppBtn>)}
      {main ? (
        <Tray>
          <Slot $w={24}><Stroke s={12} vb={12} c="#fff" d="M1 8.500l5-5 5 5" /></Slot>
          <Slot $w={24}><Stroke c="#fff" d="M5.500 4h10v9h-8M7.500 6.500h6v4.500h-6zM1 1v3M4 1v3M0 4h5v3q0 1-2.500 1t-2.500-1zM2.500 8v4h4" sw={1.200} /></Slot>
          <Slot $w={24}><Stroke c="#fff" d="M4 2h11.500v8.500h-10M10 10.500v3.500M6 14.500h8M.5 1h4v4h-4zM2.500 5v9" sw={1.200} /></Slot>
          <Slot $w={24}><Stroke c="#fff" d="M1 6h2.500l3-3v10l-3-3h-2.500zM9 5.500q2 2.500 0 5M11.500 3.500q3.500 4.500 0 9M13.500 1.500q5 6.500 0 13" sw={1} /></Slot>
          <Slot $w={22}><Fit w={12} s={17}>A</Fit></Slot>
          <Clock $ml={4}><Fit w={27}>14:51</Fit><Fit w={59}>2023/05/15</Fit></Clock>
          <Slot $w={50}><svg width="16" height="17" viewBox="0 0 16 17"><path d="M0 0h16v13h-5v4l-4-4h-7z" fill="#fff" /><path d="M3 4h10M3 6.500h10M3 9h6" stroke="#1b2941" /></svg></Slot>
          <VLine $h={40} $c="#6b7588" $ml={1} /><VLine $h={1} $c="transparent" $ml={4} />
        </Tray>
      ) : <Tray><Clock><Fit w={26}>14:51</Fit><Fit w={58}>2023/05/15</Fit></Clock><VLine $h={1} $c="transparent" $ml={3} /></Tray>}
    </Bar>
  );
}

/* ---------- left monitor ---------- */
function Explorer() {
  return (
    <>
      <ExplorerTitle>
        <Folder /><VLine $h={12} $ml={7} $c="#777" />
        <Slot $w={16} $ml={8}><svg width="16" height="16" viewBox="0 0 16 16"><path d="M2.500 1h11v14.500h-11z" fill="#fff" stroke="#888" /><path d="M5 8l3 3 4-6" stroke="#e2571f" strokeWidth="2" fill="none" /></svg></Slot>
        <Slot $w={16} $ml={7}><Folder /></Slot>
        <Slot $w={10} $ml={5}><svg width="8" height="7" viewBox="0 0 8 7"><path d="M0 0h8v1.200h-8zM0 3h8l-4 4z" /></svg></Slot>
        <VLine $h={12} $ml={6} $c="#999" /><Fit ml={8} w={23} c="#909090">素材</Fit>
        <Controls $r={14}><WinControls c="#8a8a8a" /></Controls>
      </ExplorerTitle>
      <Ribbon>
        <FileTab><Fit w={34}>ファイル</Fit></FileTab>
        <Fit ml={14} w={28}>ホーム</Fit><Fit ml={28} w={24}>共有</Fit><Fit ml={29} w={24}>表示</Fit>
        <Slot $w={12} $end><Stroke s={10} vb={10} c="#999" d="M1 3l4 4 4-4" /></Slot><Help>?</Help>
      </Ribbon>
      <AddressRow>
        <HistoryNav>
          <Stroke c="#555" d="M8 2.500l-6 6 6 6M2 8.500h12" sw={1.800} /><Slot $w={16} $ml={14}><Stroke c="#ccc" d="M8 2.500l6 6-6 6M14 8.500h-12" sw={1.800} /></Slot>
          <Slot $w={8} $ml={11}><Stroke s={8} vb={8} c="#777" d="M1 2l3 3 3-3" /></Slot><Slot $w={16} $ml={9}><Stroke c="#666" d="M3 7.500l5.500-6 5.500 6M8.500 1.500v13" sw={1.600} /></Slot>
        </HistoryNav>
        <AddressBox>
          <Folder />
          {crumbs.map(([t, w], i) => <React.Fragment key={i}><Sep><Stroke s={8} vb={8} c="#444" sw={1.200} d="M2.500 1l3 3-3 3" /></Sep><Fit w={w}>{t}</Fit></React.Fragment>)}
          <Slot $w={12} $end><Stroke s={10} vb={10} c="#555" sw={1.700} d="M1 3l4 4 4-4" /></Slot>
          <VLine $h={28} $c="#d9d9d9" $ml={8} />
          <Slot $w={31}><Stroke s={12} vb={12} c="#555" d="M3.500 2.500a4.500 4.500 0 1 0 5 0M3 .5v3.500h3.500" /></Slot>
        </AddressBox>
        <SearchBox><Stroke s={13} c="#777" d="M6.500 9.500l-5.500 6M10 1a5 5 0 1 1-.01 0z" /><Fit w={58} c="#6d6d6d">素材の検索</Fit></SearchBox>
      </AddressRow>
      <Body>
        <NavPane>
          {navGroups.map((g, i) => (
            <div key={i}>
              {g.map(([k, t, w, top, pin, sel], j) => (
                <NavRow key={j} $top={top} $sel={sel}><NavIcon k={k} /><Fit w={w}>{t}</Fit>{pin ? <PinSlot><Pin /></PinSlot> : null}</NavRow>
              ))}
            </div>
          ))}
        </NavPane>
        <ListPane>
          <Head>
            <HeadCell $w={273}><Fit ml={12} w={23}>名前</Fit></HeadCell><HeadCell $w={144}><Fit w={48}>更新日時</Fit></HeadCell><HeadCell $w={120}><Fit w={24}>種類</Fit></HeadCell><HeadCell $w={80}><Fit w={29}>サイズ</Fit></HeadCell>
            <SortMark><Stroke s={8} vb={8} c="#777" sw={1} d="M1 1.500l3 3 3-3" /></SortMark>
          </Head>
          {files.map(([k, n, w, d, sz], i) => (
            <FileRow key={i} $sel={i === 1}>
              <NameCell>{fileIcon[k]}<Fit w={w}>{n}</Fit></NameCell>
              <DateCell><Fit w={d.length > 15 ? 88 : 82}>{d}</Fit></DateCell>
              <TypeCell><Fit w={types[k][1]}>{types[k][0]}</Fit></TypeCell>
              <SizeCell>{sz && <Fit w={sizeW[sz.length]}>{sz}</Fit>}</SizeCell>
            </FileRow>
          ))}
        </ListPane>
        <Sheet>
          <SheetMain>
            <SheetGrid>
              <ColHeads>
                <Corner><svg width="11" height="11" viewBox="0 0 11 11"><path d="M11 0v11h-11z" fill="#b4b4b4" /></svg></Corner>
                {[..."CDEFGHIJKLMN"].map((c) => <ColHead key={c} $sel={c === "N"}>{c}</ColHead>)}
              </ColHeads>
              <GridBody>
                <RowHeads>{Array.from({ length: 49 }, (_, i) => <RowHead key={i} $sel={i === 21}>{i + 2}</RowHead>)}</RowHeads>
                <SystemDiagram />
              </GridBody>
            </SheetGrid>
            <VScroll><ScrollBtn><Tri d="u" /></ScrollBtn><VTrack /><VThumb /><ScrollBtn><Tri d="d" /></ScrollBtn></VScroll>
          </SheetMain>
          <Tabs>
            <TabTools><Slot $w={28} $ml={15}><Tri d="l" c="#bbb" /></Slot><Slot $w={30}><Tri d="r" c="#217346" /></Slot></TabTools>
            <Tab $w={119} $pl={15} $ml={27}><Fit w={85} s={13}>SGTSフィルタR1</Fit></Tab>
            <Tab $w={133} $pl={13}><Fit w={104} s={13}>MCR空調フィルタ図</Fit></Tab>
            <Tab $w={100} $pl={11}><Fit w={73} s={13}>第2-9図 (3)</Fit></Tab>
            <Tab $w={45} $pl={11} $on><Fit w={35} s={13}>第2-9</Fit></Tab>
            <TabTools>
              <Fit ml={8} w={11} s={14} c="#217346">...</Fit>
              <Slot $w={17} $ml={14}><Stroke s={17} vb={17} c="#b5b5b5" d="M8.500 1a7.500 7.500 0 1 1-.01 0zM8.500 4.500v8M4.500 8.500h8" sw={1.400} /></Slot>
              <Slot $w={3} $ml={19}><svg width="2" height="11"><path d="M0 0h2v2h-2zM0 4.500h2v2h-2zM0 9h2v2h-2z" fill="#999" /></svg></Slot>
              <Slot $w={15} $ml={14}><ScrollBtn><Tri d="l" /></ScrollBtn></Slot><HTrack><HThumb /></HTrack><ScrollBtn><Tri d="r" /></ScrollBtn>
            </TabTools>
          </Tabs>
        </Sheet>
      </Body>
      <Status>
        <Fit w={60}>29 個の項目</Fit><VLine $h={12} $ml={11} $c="#e3e3e3" /><Fit ml={11} w={128}>1 個の項目を選択  638 KB</Fit><VLine $h={12} $ml={10} $c="#e3e3e3" />
        <Slot $w={48} $end>
          <ViewButton $on><svg width="15" height="14" viewBox="0 0 15 14"><path d="M.5.500h4v13h-4z" fill="#fff" stroke="#999" /><path d="M6 2.500h3M11 2.500h4M6 7h3M11 7h4M6 11.500h3M11 11.500h4" stroke="#666" /><path d="M1.500 2h2v1h-2zM1.500 6.500h2v1h-2z" fill="#4a90c8" /><path d="M1.500 11h2v1h-2z" fill="#c33" /></svg></ViewButton>
          <ViewButton><svg width="14" height="12" viewBox="0 0 14 12"><path d="M.5.500h13v11h-13z" fill="#fff" stroke="#999" /><path d="M2 2h10v8h-10z" fill="#8ec6f2" /><path d="M2 5c4 0 6 3 10 3v2h-10z" fill="#2f5c75" /></svg></ViewButton>
          <VLine $h={1} $c="transparent" $ml={7} />
        </Slot>
      </Status>
    </>
  );
}

/* ---------- right monitor ---------- */
const AcTitle = styled(Row)`height: 23px; flex: none; padding-left: 2px; background: #fff;`;
const AcMenu = styled(Row)`height: 21px; flex: none; background: #fafafa; border-bottom: 1px solid #cacaca; color: #444; padding-bottom: 1px;`;
const AcTabs = styled(Row)`height: 36px; flex: none; background: #e9e9e9; color: #444; box-shadow: inset 0 -1px #c8c8c8;`;
const AcTab = styled.div`width: 181px; height: 36px; background: #fbfbfb; border-left: 1px solid #c8c8c8; border-right: 1px solid #c8c8c8; display: flex; align-items: center; padding-left: 26px; margin-left: 28px; color: #333;`;
const AcTools = styled(Row)`height: 47px; flex: none; background: #fbfbfb; border-bottom: 1px solid #c8c8c8; color: #333;`;
const Field = styled.div`width: ${(p) => p.$w}px; height: 28px; margin-left: ${(p) => p.$ml}px; border-bottom: 1px solid #bbb; display: flex; align-items: center; justify-content: center; gap: 16px;`;
const AcBody = styled.div`height: 913px; flex: none; display: flex;`;
const LeftRail = styled.div`width: 45px; background: #fbfbfb; border-right: 1px solid #c8c8c8; padding-top: 22px; display: flex; flex-direction: column; align-items: center; gap: 22px;`;
const Splitter = styled.div`width: 18px; background: #e9e9e9; display: flex; align-items: center; justify-content: center;`;
const Canvas = styled.div`width: 1775px; background: #999; display: flex; justify-content: center;`;
const Page = styled.div`width: 1292px; height: 913px; background: #fff; border: 1px solid #c0c0c0; border-top: 0;`;
const AcScroll = styled.div`width: 18px; background: #f0f0f0; border-right: 1px solid #c8c8c8; display: flex; flex-direction: column; align-items: center; justify-content: space-between; padding-bottom: 4px;`;
const ScrollTop = styled.div`width: 17px; height: 8px; background: #e0e0e0; border-bottom: 1px solid #aaa; border-right: 1px solid #aaa; margin-bottom: 4px;`;
const RightRail = styled.div`width: 46px; background: linear-gradient(#fafafa 552px, #fdfdfd 552px); border-left: 1px solid #c8c8c8; display: flex; flex-direction: column; align-items: center; padding-left: 2px;`;
const RailSlot = styled.div`height: ${(p) => p.$h || 46}px; display: flex; align-items: center; flex: none;`;
const RailLine = styled.div`width: 28px; height: 1px; flex: none; background: #ccc;`;

const I = ({ c = "#6e6e6e", s = 24, children }) => <svg width={s} height={s} viewBox="0 0 24 24" fill="none" stroke={c} strokeWidth="1.800">{children}</svg>;
const toolsLeft = [
  <I c="#b5b5b5"><path d="M2.500 2.500h15l4 4v15h-19zM7 3v7h8v-7M11 4v4" /><path d="M6.500 13h11v8h-11z" fill="#e8e8e8" /></I>,
  <I><path d="M12 1.500l3 7.500h7.500l-6 4.700 2.300 7.800-6.800-4.700-6.800 4.700 2.300-7.800-6-4.700h7.500z" /></I>,
  <I><path d="M6 6v-4h12v4" /><path d="M1.500 7h21v10h-4v-3h-13v3h-4z" fill="#6e6e6e" /><path d="M6 13.500h12v8h-12zM9 16h6M9 19h6" fill="#fff" /></I>,
  <I><path d="M1.500 3.500h21v17h-21zM2 4l10 9 10-9M2 20l7-9M22 20l-7-9" /></I>,
  <I><circle cx="10.500" cy="9.500" r="7.800" /><path d="M16 15l7 7.500" strokeWidth="2.500" /><path d="M6.500 9.500h1.700M9.700 9.500h1.700M13 9.500h1.700" /></I>,
];
const circled = (d) => <I c="#b5b5b5"><circle cx="12" cy="12" r="9.800" /><path d={d} /></I>;
const toolsMid = [
  <I><path d="M6 2v18l4.500-4 3 6.500 3-1.500-3-6h6z" fill="#2072c8" stroke="none" /></I>,
  <I><path d="M7 15l-3-4c-1.500-1.500-3.500-.5-2.500 1.500l4.500 8q2 2 6 2c6 0 8.500-3 8.500-8v-8c0-2-2.500-2-2.500 0v5-8c0-2.200-3-2.200-3 0v7-8.500c0-2.200-3-2.200-3 0v8.500-7.500c0-2-3-2-3 0v10" strokeWidth="1.500" /></I>,
  <I><circle cx="12" cy="12" r="9.800" /><path d="M7 12h10" /></I>,
  <I><circle cx="12" cy="12" r="9.800" /><path d="M7 12h10M12 7v10" /></I>,
];
const toolsEdit = [
  <I><path d="M2.500 2.500h19v14h-9l-4 5v-5h-6z" fill="#e6e6e6" /><path d="M6.500 7.500h11M6.500 11.500h11" /></I>,
  <I><path d="M13 18h10v4h-10z" fill="#ddd" stroke="none" /><path d="M20.500 1.500l2 2-9 15-7 2-2-2 5-9z" fill="#e6e6e6" /><path d="M4 17l-3 5h6z" fill="#6e6e6e" /></I>,
  <I><path d="M13 7l6 5-3 7-13 3.500 4-13zM3.500 22l6-8M13 7l2-5 7 7-3 3" fill="#e6e6e6" /><path d="M17 21l2-3 1 3 2-2 1 3" /></I>,
  <I><path d="M6 2h8l6 5v3h-7v-7" /><path d="M1 5h8v6h-8z" fill="#6e6e6e" /><path d="M4 14v7h5M20 11l3 2-7 8-4 1.500 1-4z" fill="#fff" /></I>,
  <I c="#b5b5b5"><path d="M4.500 5.500h15l-1 17h-13zM2 5h20M8 4v-2h8v2M9 9v10M12 9v10M15 9v10" /></I>,
  <I><path d="M7 21.500C1 17 1 9 5 5.500S16 1 19.500 6s2 10-1 13.500" strokeWidth="2.200" /><path d="M14 21l9-1-3.500-7z" fill="#6e6e6e" stroke="none" /></I>,
];
const DocA = ({ c, f }) => <><path d="M2.500 2h12l4 4v6l-7 9.500h-9z" fill={f} stroke="none" /><path d="M11 20.500h-8.500v-18.500h12l4 4v5M5 15.500c3.500-2 5-5 4.500-9 1 4.500 3 6 6 6-3-.5-7 0-10.500 3" strokeWidth="1.500" /><circle cx="17.500" cy="17" r="6" fill={c} stroke="#fafafa" strokeWidth="1" /></>;
const rail = [
  <I c="#e34850"><DocA c="#e34850" f="#fbe0e1" /><path d="M14 17h7M17.500 13.500v7" stroke="#fff" /></I>,
  <I c="#6767ec"><path d="M1 2.500h11v14h-11zM3.500 12c3-2 3.500-4 3-7 1 4 2 4 4 4.500" strokeWidth="1.400" /><path d="M13 2h6v4h5v11h-9v2h2.500l-5.500 5-5.500-5h3.500v-8h3z" fill="#6767ec" stroke="#fafafa" strokeWidth=".8" /><path d="M20.500 1.500v3h3" strokeWidth="1.500" /></I>,
  <I c="#d83790"><path d="M2 2.500h20v7h-20zM2 14h9v7.500h-9z" fill="#f6d7e8" /><path d="M15 14.500h8M15 17.500h8M15 20.500h8" strokeWidth="1.200" /></I>,
  <I c="#9256d9"><path d="M2 21l3-7.500 10-11q4-1.500 4 2l-10 12z" fill="#e9ddf7" /><path d="M1 21.500h9l5-6-1 5.500 3.500-3v3l3-2 .5 2h3" /></I>,
  <I c="#1b959a"><DocA c="#1b959a" f="#d1eaeb" /><path d="M14 17h6.500M18 14l3 3-3 3" stroke="#fff" /></I>,
  <I c="#86cc44"><path d="M13 2.500h9v18h-9z" fill="#e1f2d3" /><path d="M2.500 11v9.500h8M2.500 11.500h8" strokeDasharray="3.200 2" /><path d="M2 2v6h7l-2-2.500q1.500-2 3-2" fill="#86cc44" strokeWidth="1" /></I>,
  <I c="#d9b900"><path d="M2 2.500h10l5 6v4.500h-6v7.500h-9zM11 3v6h6" fill="#f5efcc" /><path d="M12 13h11v7h-4l-3 3v-3h-4z" fill="#d9b900" stroke="#fff" strokeWidth=".6" /><path d="M14 15.500h7M14 17.500h5" stroke="#fff" strokeWidth="1" /></I>,
  <I c="#dfbf2c"><path d="M3 3.500h18v12h-8l-5 5v-5h-5z" fill="#dfbf2c" strokeLinejoin="round" /><path d="M6 8h12M6 11.500h8" stroke="#fff" strokeWidth="1.500" /></I>,
  <I c="#3faf56"><path d="M5.500 9v-6h8l4 4v2" fill="#d8efdc" /><path d="M1 10h22v6h-4v-2h-14v2h-4z" fill="#3faf56" strokeWidth="1" /><path d="M5.500 16v6h13v-6" strokeDasharray="2.500 1.500" /><path d="M20.500 1v5M18 3.500h5M2 3v4M0 5h4" strokeWidth="1.100" /></I>,
  <I c="#6767ec"><path d="M12 2l8.500 3v8q-1 6-8.500 9-7.500-3-8.500-9v-8z" /><path d="M12 3v18q-6.500-3-7.500-8.500v-7z" fill="#dcdcfa" stroke="none" /></I>,
  <I><path d="M2 18l9-8q-1-5 3-7l5-1-3 4 2 2 4-2q0 6-6 6l-10 8q-4 2-4-2z" fill="#6e6e6e" stroke="none" /><circle cx="17.800" cy="17.500" r="5.800" fill="#6e6e6e" stroke="#fafafa" strokeWidth="1" /><path d="M14.800 17.500h6M17.800 14.500v6" stroke="#fff" /></I>,
];

function Acrobat() {
  return (
    <>
      <AcTitle>
        <Pdf /><Fit ml={5} w={359}>SGTSフィルタ装置,PCVスプレイヘッダR2.pdf - Adobe Acrobat Pro (32-bit)</Fit>
        <Controls $r={20}><WinControls c="#000" /></Controls>
      </AcTitle>
      <AcMenu>
        <Fit ml={7} w={51}>ファイル (F)</Fit><Fit ml={14} w={41}>編集 (E)</Fit><Fit ml={14} w={39}>表示(V)</Fit><Fit ml={14} w={52}>電子サイン</Fit><Fit ml={15} w={60}>ウィンドウ(W)</Fit><Fit ml={14} w={46}>ヘルプ(H)</Fit>
      </AcMenu>
      <AcTabs>
        <Fit ml={14.500} w={42} s={15}>ホーム</Fit><Fit ml={28.500} w={40} s={15}>ツール</Fit>
        <AcTab><Fit w={126} s={13}>SGTSフィルタ装置,PC...</Fit><Slot $w={9} $ml={9}><Stroke s={8} vb={8} c="#555" sw={1.800} d="M1 1l6 6M7 1l-6 6" /></Slot></AcTab>
      </AcTabs>
      <AcTools>
        {toolsLeft.map((t, i) => <Slot key={i} $ml={i ? 0 : 2.600}>{t}</Slot>)}
        <Slot $ml={307.400}>{circled("M12 18v-11M8 11l4-4 4 4")}</Slot><Slot>{circled("M12 6v11M8 13l4 4 4-4")}</Slot>
        <Field $w={28} $ml={10}><Fit w={6}>1</Fit></Field><Fit ml={6} w={18}>/  1</Fit><VLine $ml={19} $h={28} />
        {toolsMid.map((t, i) => <Slot key={i} $ml={i ? 0 : 10.500}>{t}</Slot>)}
        <Field $w={68} $ml={10}><Fit w={28}>100%</Fit><Tri d="d" c="#6e6e6e" /></Field>
        <Slot $w={24} $ml={20}><I c="#2072c8"><path d="M3 1.500h13l5 4.500v16h-18zM16 2v5h5" /><path d="M12 7.500v4M12 14.500v4M6 13h4M14 13h4M10.500 9l1.500-1.500 1.500 1.500M10.500 17l1.500 1.500 1.500-1.500M7.500 11.500l-1.500 1.500 1.500 1.500M16.500 11.500l1.500 1.500-1.500 1.500" strokeWidth="1.100" /></I></Slot>
        <Slot $w={7} $ml={2}><Tri d="d" c="#2072c8" /></Slot>
        <Slot $ml={13.500}><I><path d="M1.500 2.500h21v8h-21z" fill="#e6e6e6" /><path d="M5 6.500h2M9 6.500h2M13 6.500h2M17 6.500h2M12 13v9M7.500 17.500l4.500 4.500 4.500-4.500" /></I></Slot>
        <VLine $ml={10} $h={28} />
        {toolsEdit.map((t, i) => <Slot key={i} $ml={i ? 0 : 11}>{t}</Slot>)}
      </AcTools>
      <AcBody>
        <LeftRail>
          <I><path d="M9 2.500h8l5 5v10h-13zM16.500 3v5h5M8.500 7h-6v14.500h12v-4" /></I>
          <I><path d="M5.500 1.500h13v20l-6.500-6-6.500 6z" /></I>
          <I><path d="M17 6l-8 10c-2 3 1 5 3 2.500l8-10c3-4-1-8-4.500-4l-9 11c-4 5 1 9.500 5 5l7-9" strokeWidth="1.800" /></I>
        </LeftRail>
        <Splitter><Tri d="l" c="#666" /></Splitter>
        <Canvas><Page><SprayDiagram /></Page></Canvas>
        <AcScroll><div><ScrollTop /><Slot $w={17}><Stroke s={8} vb={8} c="#bbb" d="M1 5.500l3-3 3 3" sw={1.500} /></Slot></div><Stroke s={8} vb={8} c="#bbb" d="M1 2.500l3 3 3-3" sw={1.500} /></AcScroll>
        <Splitter><Tri d="l" c="#666" /></Splitter>
        <RightRail>
          <RailSlot><I s={22}><circle cx="10.500" cy="9.500" r="8" strokeWidth="2" /><path d="M16 15.500l6.500 5.500" strokeWidth="2.700" /><path d="M9.500 6v7l-4-3.500zM12 6v7l4-3.500z" fill="#6e6e6e" stroke="none" /></I></RailSlot>
          <RailLine />
          {rail.map((r, i) => <RailSlot key={i} $h={46}>{r}</RailSlot>)}
          <RailSlot $h={313} /><RailLine />
          <RailSlot $h={46}><I s={22}><path d="M4 4v16" strokeWidth="3.500" /><path d="M8 12h13M17 8l4.500 4-4.500 4" /></I></RailSlot>
        </RightRail>
      </AcBody>
    </>
  );
}

export default function App() {
  return (
    <Desktop>
      <Global />
      <Monitor><Explorer /><Taskbar main /></Monitor>
      <Monitor><Acrobat /><Taskbar /></Monitor>
    </Desktop>
  );
}
